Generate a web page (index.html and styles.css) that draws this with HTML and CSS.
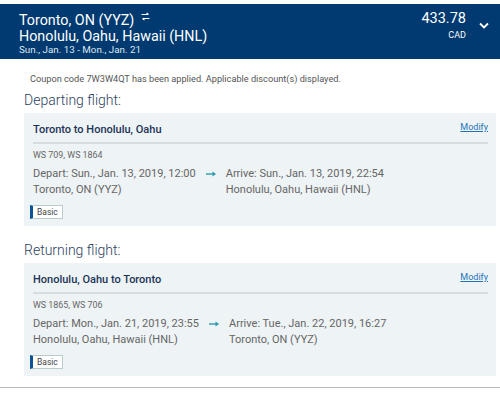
FILE: index.html
```html
<!DOCTYPE html>
<html>
<head>
<meta charset="utf-8">
<link rel="stylesheet" href="styles.css">
</head>
<body>
<header class="hdr">
  <div class="route">
    <div class="city">Toronto, ON (YYZ) <svg class="swap" width="9" height="9" viewBox="0 0 9 9"><path d="M0.5 2.5h7M5.5 0.8l2 1.7M8.5 6.5h-7M3.5 8.2l-2-1.7" stroke="#fff" stroke-width="1.1" fill="none"/></svg></div>
    <div class="city">Honolulu, Oahu, Hawaii (HNL)</div>
    <div class="dates">Sun., Jan. 13 - Mon., Jan. 21</div>
  </div>
  <div class="price">
    <div class="amount">433.78</div>
    <div class="cur">CAD</div>
  </div>
  <svg class="chev" width="10" height="7" viewBox="0 0 10 7"><path d="M1 1.5l4 4 4-4" stroke="#fff" stroke-width="1.8" fill="none"/></svg>
</header>
<main class="content">
  <p class="coupon">Coupon code 7W3W4QT has been applied. Applicable discount(s) displayed.</p>
  <h2 class="heading">Departing flight:</h2>
  <section class="card">
    <div class="card-top">
      <span class="title">Toronto to Honolulu, Oahu</span>
      <a class="modify" href="#">Modify</a>
    </div>
    <div class="flights">WS 709, WS 1864</div>
    <div class="legs">
      <div class="leg">
        <div>Depart: Sun., Jan. 13, 2019, 12:00</div>
        <div>Toronto, ON (YYZ)</div>
      </div>
      <svg class="arrow" width="10" height="6" viewBox="0 0 10 6"><path d="M0 3h7" stroke="#2a9bb0" stroke-width="1.4"/><path d="M6.5 0.6L10 3 6.5 5.4z" fill="#2a9bb0"/></svg>
      <div class="leg">
        <div>Arrive: Sun., Jan. 13, 2019, 22:54</div>
        <div>Honolulu, Oahu, Hawaii (HNL)</div>
      </div>
    </div>
    <span class="badge">Basic</span>
  </section>
  <h2 class="heading">Returning flight:</h2>
  <section class="card">
    <div class="card-top">
      <span class="title">Honolulu, Oahu to Toronto</span>
      <a class="modify" href="#">Modify</a>
    </div>
    <div class="flights">WS 1865, WS 706</div>
    <div class="legs">
      <div class="leg">
        <div>Depart: Mon., Jan. 21, 2019, 23:55</div>
        <div>Honolulu, Oahu, Hawaii (HNL)</div>
      </div>
      <svg class="arrow" width="10" height="6" viewBox="0 0 10 6"><path d="M0 3h7" stroke="#2a9bb0" stroke-width="1.4"/><path d="M6.5 0.6L10 3 6.5 5.4z" fill="#2a9bb0"/></svg>
      <div class="leg">
        <div>Arrive: Tue., Jan. 22, 2019, 16:27</div>
        <div>Toronto, ON (YYZ)</div>
      </div>
    </div>
    <span class="badge">Basic</span>
  </section>
</main>
<div class="rule"></div>
</body>
</html>
```
FILE: styles.css
```css
* { box-sizing: border-box; }
body {
  margin: 0;
  font-family: Roboto, "Liberation Sans", sans-serif;
  background: #fff;
  width: 500px;
}
.hdr {
  margin-top: 4px;
  height: 55px;
  background: #003a70;
  color: #fff;
  display: flex;
  align-items: flex-start;
  padding: 8px 0 0 19px;
}
.route { flex: 1; }
.city { font-size: 14.3px; line-height: 16px; }
.swap { margin-left: 3px; vertical-align: 4px; }
.dates { font-size: 9.8px; line-height: 12px; margin-top: 0; color: #dde6f0; }
.price { text-align: right; margin-top: -1px; }
.amount { font-size: 14.5px; line-height: 16px; }
.cur { font-size: 9px; line-height: 12px; margin-top: 2px; }
.chev { margin: 10px 11px 0 13px; }
.content { padding: 0 4px 0 24px; }
.coupon {
  margin: 14px 0 0 6px;
  font-size: 9.2px;
  line-height: 11px;
  color: #555;
}
.heading {
  margin: 7px 0 4px 0;
  font-size: 14px;
  line-height: 18px;
  font-weight: 300;
  color: #2c4160;
}
.card {
  background: #eef3f5;
  padding: 0 8px 7px 9px;
  margin-bottom: 15px;
}
.card-top {
  display: flex;
  justify-content: space-between;
  align-items: center;
  height: 31px;
  padding-top: 3px;
  border-bottom: 2px solid #d5dde0;
}
.title { font-size: 11px; font-weight: 500; color: #1d3455; }
.modify { font-size: 9px; color: #1f73b7; margin-top: -4px; }
.flights { font-size: 8.9px; color: #666; margin-top: 6px; line-height: 11px; }
.legs {
  display: flex;
  align-items: flex-start;
  margin-top: 5px;
  font-size: 11px;
  line-height: 16px;
  color: #666;
}
.leg { flex: none; }
.arrow { margin: 5px 10px 0 10px; }
.badge {
  display: block;
  width: max-content;
  height: 14px;
  margin: 7px 0 0 -3px;
  font-size: 8.5px;
  line-height: 12px;
  padding: 0 4px 0 4px;
  background: #fff;
  border: 1px solid #bcc;
  border-left: 3px solid #0a5394;
  color: #444;
}
.rule { border-top: 1px solid #bbb; margin-top: -4px; }
```
